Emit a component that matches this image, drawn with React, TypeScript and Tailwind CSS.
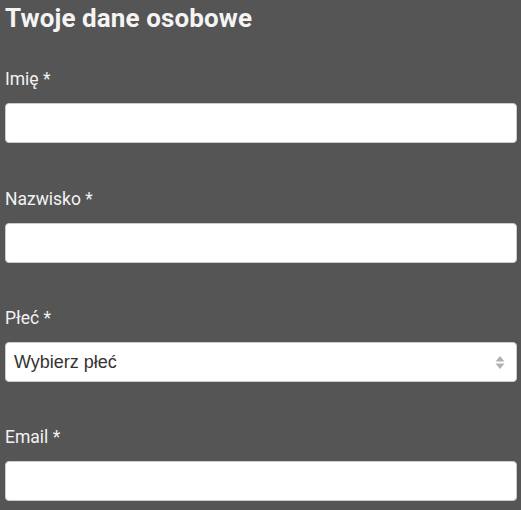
export default function App() {
  const fields = [
    { label: "Imię *", type: "input", mt: "mt-[33px]" },
    { label: "Nazwisko *", type: "input", mt: "mt-[44px]" },
    { label: "Płeć *", type: "select", mt: "mt-[43px]" },
    { label: "Email *", type: "input", mt: "mt-[43px]" },
  ];
  return (
    <div className="min-h-[510px] w-[521px] bg-[#555555] pt-[2px] pl-[5px] font-['Roboto',sans-serif]">
      <h1 className="text-[26px] leading-[32px] font-bold text-[#f4f4f4] tracking-[0.1px]">Twoje dane osobowe</h1>
      <div className="flex flex-col">
        {fields.map((f) => (
          <div key={f.label} className={`flex flex-col ${f.mt}`}>
            <label className="text-[17.5px] leading-[24px] text-[#f2f2f2]">{f.label}</label>
            {f.type === "input" ? (
              <div className="mt-[12px] h-[40px] w-[512px] rounded-[4px] bg-white border border-[#cccccc]" />
            ) : (
              <div className="mt-[12px] h-[40px] w-[512px] rounded-[4px] bg-white border border-[#cccccc] flex items-center justify-between pl-[8px] pr-[11px]">
                <span className="font-['Liberation_Sans',sans-serif] text-[18px] text-[#333333]">Wybierz płeć</span>
                <svg width="10" height="15" viewBox="0 0 10 15">
                  <path d="M5 1 L9.5 6.5 L0.5 6.5 Z" fill="#b0b0b0" />
                  <path d="M5 14 L9.5 8.5 L0.5 8.5 Z" fill="#b0b0b0" />
                </svg>
              </div>
            )}
          </div>
        ))}
      </div>
    </div>
  );
}
